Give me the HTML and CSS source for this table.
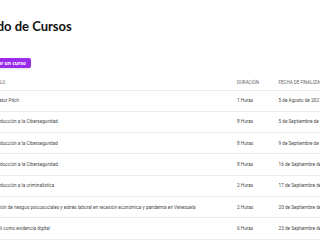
FILE: index.html
```html
<!DOCTYPE html>
<html lang="es">
<head>
    <meta charset="UTF-8">
    <meta name="viewport" content="width=device-width, initial-scale=1.0">
    <title>Listado de Cursos</title>
    <link rel="stylesheet" href="styles.css">
</head>
<body>
<div class="page">
    <h1 class="page-title">Listado de Cursos</h1>
    <button class="add-btn">Agregar un curso</button>

    <table class="courses">
        <thead>
            <tr>
                <th class="col-title">Título</th>
                <th class="col-hours">Duración</th>
                <th class="col-date">Fecha de finalización</th>
            </tr>
        </thead>
        <tbody>
            <tr>
                <td>Elevator Pitch</td>
                <td>1 Horas</td>
                <td>5 de Agosto de 2021</td>
            </tr>
            <tr>
                <td>Introducción a la Ciberseguridad</td>
                <td>8 Horas</td>
                <td>5 de Septiembre de 2021</td>
            </tr>
            <tr>
                <td>Introducción a la Ciberseguridad</td>
                <td>8 Horas</td>
                <td>9 de Septiembre de 2021</td>
            </tr>
            <tr>
                <td>Introducción a la Ciberseguridad</td>
                <td>8 Horas</td>
                <td>16 de Septiembre de 2021</td>
            </tr>
            <tr>
                <td>Introducción a la criminalística</td>
                <td>2 Horas</td>
                <td>17 de Septiembre de 2021</td>
            </tr>
            <tr>
                <td>Gestión de riesgos psicosociales y estrés laboral en recesión económica y pandemia en Venezuela</td>
                <td>2 Horas</td>
                <td>20 de Septiembre de 2021</td>
            </tr>
            <tr>
                <td>Email como evidencia digital</td>
                <td>6 Horas</td>
                <td>23 de Septiembre de 2021</td>
            </tr>
        </tbody>
    </table>
</div>
</body>
</html>
```

FILE: styles.css
```css
body {
    margin: 0;
    background-color: #fff;
    font-family: Roboto, "Liberation Sans", sans-serif;
    overflow: hidden;
}

.page {
    margin-left: -22px;
    width: 420px;
    padding-top: 17px;
}

.page-title {
    font-family: Lato, "Noto Sans", sans-serif;
    font-size: 13px;
    font-weight: bold;
    line-height: 18px;
    color: #111;
    margin: 0 0 23px -8.5px;
}

.add-btn {
    display: block;
    height: 10px;
    padding: 0 5px;
    border: none;
    border-radius: 2px;
    background-color: #9a2bea;
    color: #fff;
    font-family: "Noto Sans", sans-serif;
    font-size: 5px;
    font-weight: bold;
    line-height: 10px;
    box-shadow: 0 1px 2px rgba(0, 0, 0, 0.12);
    margin-bottom: 7px;
}

.courses {
    border-collapse: collapse;
    width: 100%;
}

.courses th,
.courses td {
    text-align: left;
    padding: 0 0 0 12.5px;
    border-bottom: 1px solid #eee;
    white-space: nowrap;
}

.courses th {
    height: 14.5px;
    font-size: 4.5px;
    font-weight: normal;
    text-transform: uppercase;
    color: #666;
}

.courses td {
    height: 20.3px;
    font-size: 4.7px;
    color: #4a4a4a;
}

.col-title {
    width: 234px;
}

.col-hours {
    width: 29px;
}
```
